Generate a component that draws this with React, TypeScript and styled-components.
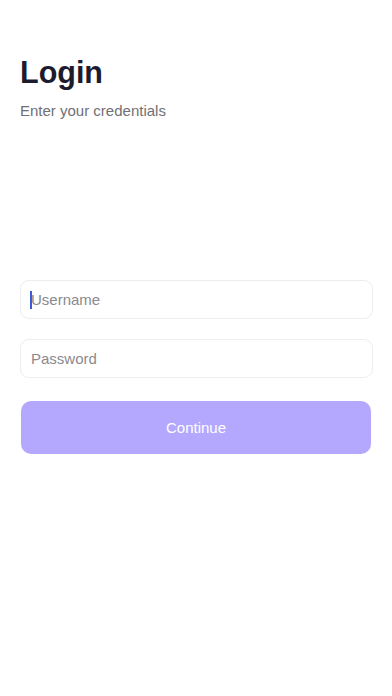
import React from "react";
import styled, { createGlobalStyle } from "styled-components";

const GlobalStyle = createGlobalStyle`
  html, body {
    margin: 0;
    padding: 0;
    background: #ffffff;
    font-family: "Liberation Sans", Arial, sans-serif;
  }
`;

const Page = styled.main`
  box-sizing: border-box;
  width: 392px;
  min-height: 696px;
  padding: 56px 19px 0 20px;
  display: flex;
  flex-direction: column;
`;

const Title = styled.h1`
  margin: 0;
  font-size: 30.5px;
  line-height: 32px;
  font-weight: 700;
  color: #1c1c2e;
`;

const Subtitle = styled.p`
  margin: 14px 0 0;
  font-size: 15px;
  line-height: 18px;
  color: #707075;
`;

const Form = styled.form`
  margin-top: 160px;
  display: flex;
  flex-direction: column;
  gap: 20px;
`;

const Field = styled.div`
  position: relative;
`;

const Input = styled.input`
  box-sizing: border-box;
  width: 100%;
  height: 39px;
  padding: 0 10px;
  border: 1px solid #ededf0;
  border-radius: 9px;
  background: #fff;
  font-family: inherit;
  font-size: 15px;
  color: #1c1c2e;
  outline: none;

  &::placeholder {
    color: #8a8a8e;
  }
`;

const Caret = styled.span`
  position: absolute;
  left: 10px;
  top: 11px;
  width: 2px;
  height: 18px;
  background: #3b5bdb;
`;

const Button = styled.button`
  box-sizing: border-box;
  margin: 3px 2px 0 1px;
  height: 53px;
  border: none;
  border-radius: 10px;
  background: #b3a8fd;
  color: #ffffff;
  font-family: inherit;
  font-size: 15px;
  cursor: pointer;
`;

export default function App() {
  return (
    <>
      <GlobalStyle />
      <Page>
        <Title>Login</Title>
        <Subtitle>Enter your credentials</Subtitle>
        <Form onSubmit={e => e.preventDefault()}>
          <Field>
            <Input type="text" placeholder="Username" />
            <Caret />
          </Field>
          <Field>
            <Input type="password" placeholder="Password" />
          </Field>
          <Button type="submit">Continue</Button>
        </Form>
      </Page>
    </>
  );
}
